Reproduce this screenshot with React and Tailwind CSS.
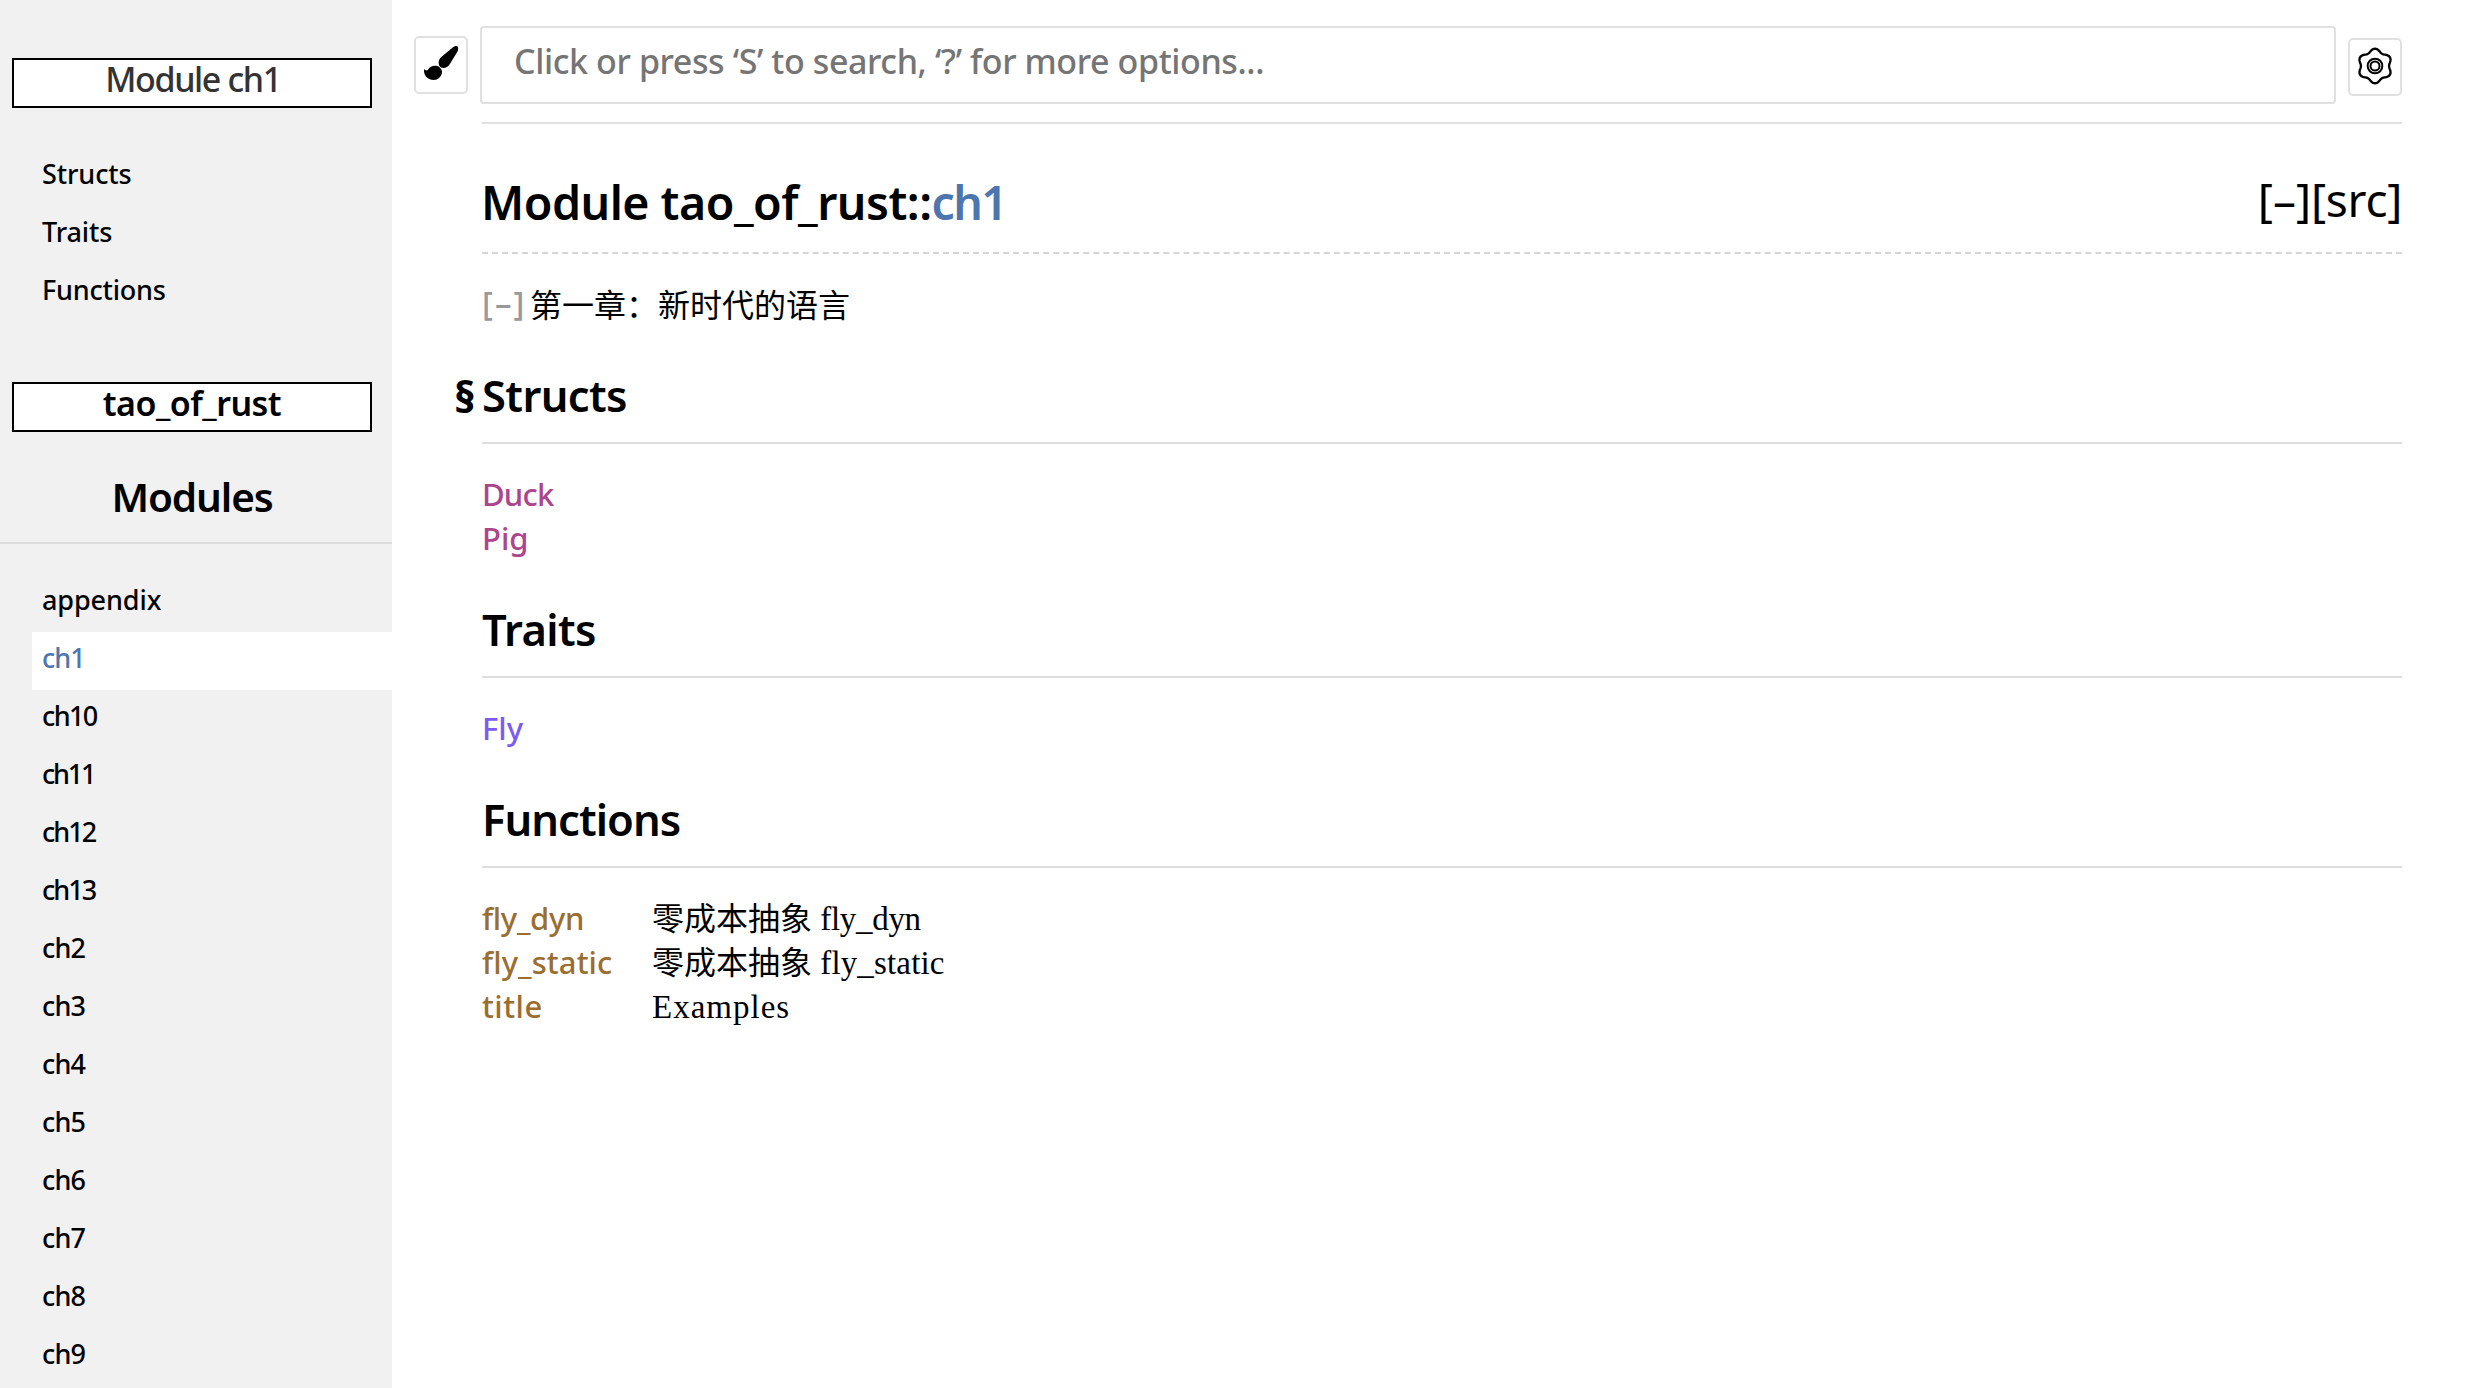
import React from "react";

const anchors = [
  { label: "Structs", track: "tracking-[-0.1px]" },
  { label: "Traits", track: "tracking-[-0.1px]" },
  { label: "Functions", track: "tracking-[-0.2px]" },
];

const wide = "tracking-[-1.6px]";
const slim = "tracking-[-0.8px]";

const modules = [
  { label: "appendix", track: "tracking-[-0.1px]" },
  { label: "ch1", track: "tracking-[-1px]", active: true },
  { label: "ch10", track: wide },
  { label: "ch11", track: "tracking-[-2.2px]" },
  { label: "ch12", track: "tracking-[-2px]" },
  { label: "ch13", track: "tracking-[-2px]" },
  { label: "ch2", track: slim },
  { label: "ch3", track: slim },
  { label: "ch4", track: slim },
  { label: "ch5", track: slim },
  { label: "ch6", track: slim },
  { label: "ch7", track: slim },
  { label: "ch8", track: slim },
  { label: "ch9", track: slim },
];

function SideLink({ label, track, active }) {
  return (
    <a
      className={`block h-[58px] pl-2.5 text-[27px] leading-[52px] font-medium ${track} ${
        active ? "bg-white text-[#4d76ae]" : "text-black"
      }`}
    >
      {label}
    </a>
  );
}

function Sidebar() {
  return (
    <nav className="w-[392px] shrink-0 overflow-hidden bg-[#f1f1f1] pt-[58px]">
      <p className="mr-5 ml-3 h-[50px] border-2 border-black bg-white pl-0.5 text-center text-[34px] leading-[39px] font-medium tracking-[-1.4px] text-[#333]">
        Module ch1
      </p>
      <div className="mt-10 pl-8">
        {anchors.map((a) => (
          <SideLink key={a.label} {...a} />
        ))}
      </div>
      <p className="mt-[60px] mr-5 ml-3 h-[50px] border-2 border-black bg-white text-center text-[34px] leading-[38px] font-semibold tracking-[-0.52px]">
        tao_of_rust
      </p>
      <h2 className="mt-2.5 h-[102px] border-b-2 border-[#ddd] pt-5 pr-2 text-center text-[40.5px] leading-[69px] font-semibold tracking-[-1.1px]">
        Modules
      </h2>
      <div className="mt-[30px] pl-8">
        {modules.map((m) => (
          <SideLink key={m.label} {...m} />
        ))}
      </div>
    </nav>
  );
}

function BrushIcon() {
  return (
    <svg width="38" height="42" viewBox="0 0 114 126" fill="black">
      <path d="M103 12C109 12 110 19 107 28L84 65C76 78 64 81 55 75C47 68 49 54 57 46L93 16C97 13 100 12 103 12Z" />
      <path d="M6 80C9 85 14 87 18 83C25 69 46 68 54 77C61 84 62 91 58 98C52 114 32 118 18 109C9 103 5 94 6 80Z" />
    </svg>
  );
}

const gearOutline =
  Array.from({ length: 120 }, (_, i) => {
    const t = (i * Math.PI) / 60;
    const r = 47 + 4.8 * Math.cos(6 * (t - Math.PI / 2));
    return `${i ? "L" : "M"}${(63 + r * Math.cos(t)).toFixed(2)} ${(66 - r * Math.sin(t)).toFixed(2)}`;
  }).join("") + "Z";

function GearIcon() {
  return (
    <svg width="42" height="44" viewBox="0 0 126 132" fill="none" stroke="black" strokeWidth="7">
      <path d={gearOutline} />
      <circle cx="63" cy="66" r="22" strokeWidth="6" />
      <circle cx="63" cy="66" r="13.5" strokeWidth="6" />
    </svg>
  );
}

function Section({ title, track, mark, children }) {
  return (
    <section className="mb-11">
      <h2
        className={`relative h-[74px] border-b-2 border-[#ddd] text-[43.5px] leading-[50px] font-semibold ${track}`}
      >
        {mark && <span className="absolute top-px -left-7 font-extrabold">§</span>}
        {title}
      </h2>
      <div className="pt-7 text-[31px] leading-[44px] font-medium">{children}</div>
    </section>
  );
}

function FnRow({ name, track, children }) {
  return (
    <div className="flex h-11">
      <a className={`w-[170px] text-[#9a6e31] ${track}`}>{name}</a>
      <span className="font-['Liberation_Serif','Noto_Sans_CJK_SC',serif] text-[33px] leading-[46px] font-normal">
        {children}
      </span>
    </div>
  );
}

export default function App() {
  return (
    <div className="flex h-[1388px] w-[2488px] overflow-hidden bg-white font-['Noto_Sans','Noto_Sans_CJK_SC',sans-serif] text-black">
      <Sidebar />
      <main className="w-[2010px]">
        <div className="flex items-start gap-3 pl-[22px]">
          <button className="mt-9 flex h-[58px] w-[54px] items-start rounded-[5px] border-2 border-[#e0e0e0] pt-1 pl-1.5">
            <BrushIcon />
          </button>
          <div className="mt-[26px] h-[78px] flex-1 rounded-[4px] border-2 border-[#e0e0e0] pl-8 text-[34px] leading-[66px] font-medium tracking-[-0.4px] text-[#757575]">
            Click or press ‘S’ to search, ‘?’ for more options...
          </div>
          <button className="mt-[38px] flex h-[58px] w-[54px] items-start rounded-[5px] border-2 border-[#e0e0e0] pt-1 pl-1">
            <GearIcon />
          </button>
        </div>
        <div className="ml-[90px]">
          <hr className="mt-[18px] border-t-2 border-[#e0e0e0]" />
          <h1 className="flex h-[130px] justify-between border-b-2 border-dashed border-[#d5d5d5] pt-14 text-[46.5px] leading-[44px]">
            <span className="-ml-px font-semibold tracking-[-0.5px]">
              Module tao_of_rust::<a className="tracking-[-1.6px] text-[#4d76ae]">ch1</a>
            </span>
            <span className="flex text-[46px] leading-[38px]">
              <span>[–]</span>
              <span className="tracking-[-0.3px]">[src]</span>
            </span>
          </h1>
          <div className="flex h-[116px] pt-5 text-[32px] leading-[58px]">
            <span className="w-12 text-[33px] font-medium tracking-[2px] text-[#999]">[–]</span>
            <span className="font-['Noto_Sans_CJK_SC',sans-serif]">第一章：新时代的语言</span>
          </div>
          <Section title="Structs" track="tracking-[-0.6px]" mark>
            <a className="block h-11 tracking-[-0.8px] text-[#ad448e]">Duck</a>
            <a className="block h-11 text-[#ad448e]">Pig</a>
          </Section>
          <Section title="Traits" track="tracking-[-0.6px]">
            <a className="block h-11 text-[#7c5af3]">Fly</a>
          </Section>
          <Section title="Functions" track="tracking-[-0.95px]">
            <FnRow name="fly_dyn" track="tracking-[-0.3px]">
              <span className="text-[32px]">零成本抽象</span> <span className="tracking-[-0.3px]">fly_dyn</span>
            </FnRow>
            <FnRow name="fly_static" track="tracking-[0.1px]">
              <span className="text-[32px]">零成本抽象</span> <span className="tracking-[0.15px]">fly_static</span>
            </FnRow>
            <FnRow name="title" track="tracking-[0.5px]">
              <span className="tracking-[1px]">Examples</span>
            </FnRow>
          </Section>
        </div>
      </main>
    </div>
  );
}
